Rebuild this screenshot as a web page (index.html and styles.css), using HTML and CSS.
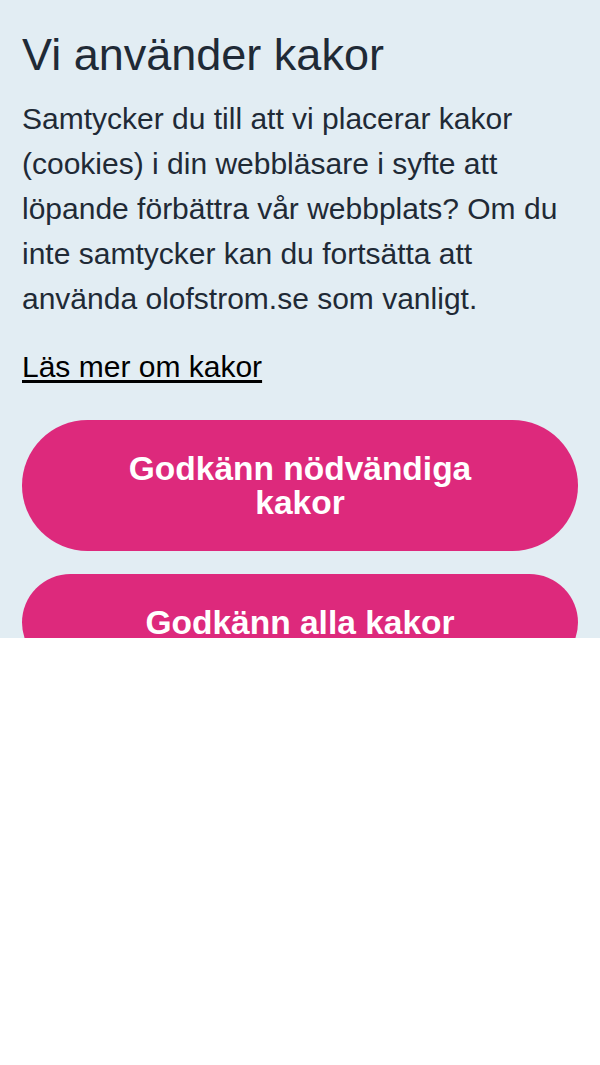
FILE: index.html
```html
<!DOCTYPE html>
<html lang="sv">
  <head>
    <meta charset="UTF-8" />
    <meta name="viewport" content="width=device-width, initial-scale=1.0" />
    <title>Kakor</title>
    <link rel="stylesheet" href="styles.css">
  </head>
  <body>
    <div class="cookie-panel">
      <h1>Vi använder kakor</h1>
      <p>
        Samtycker du till att vi placerar kakor (cookies) i din webbläsare i
        syfte att löpande förbättra vår webbplats? Om du inte samtycker kan du
        fortsätta att använda olofstrom.se som vanligt.
      </p>
      <a class="read-more" href="#">Läs mer om kakor</a>
      <div class="actions">
        <button type="button">Godkänn nödvändiga kakor</button>
        <button type="button">Godkänn alla kakor</button>
      </div>
    </div>
  </body>
</html>
```

FILE: styles.css
```css
body {
  margin: 0;
  background-color: #ffffff;
  font-family: "Liberation Sans", Arial, sans-serif;
}
.cookie-panel {
  box-sizing: border-box;
  height: 638px;
  overflow: hidden;
  padding: 28px 22px 0;
  background-color: #e2edf3;
  color: #1f2a36;
}
h1 {
  margin: 0 0 14px;
  font-size: 45px;
  line-height: 54px;
  font-weight: normal;
}
p {
  margin: 0 0 23px;
  font-size: 30px;
  line-height: 45px;
}
.read-more {
  display: inline-block;
  font-size: 30px;
  line-height: 45px;
  color: #000000;
  text-decoration: underline;
  text-underline-offset: 3px;
}
.actions {
  display: flex;
  flex-direction: column;
  gap: 23px;
  margin-top: 31px;
}
button {
  width: 100%;
  padding: 32px 60px 31px;
  border: none;
  border-radius: 66px;
  background-color: #dd297c;
  color: #ffffff;
  font-family: "Liberation Sans", Arial, sans-serif;
  font-size: 33.5px;
  line-height: 34px;
  font-weight: bold;
  cursor: pointer;
}
```
